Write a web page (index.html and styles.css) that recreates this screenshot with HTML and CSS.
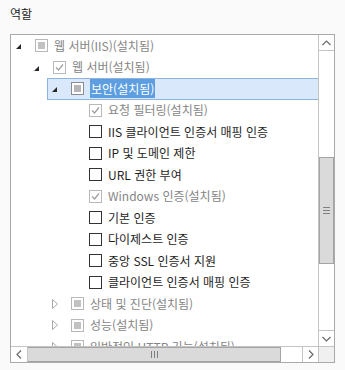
FILE: index.html
```html
<!DOCTYPE html>
<html lang="ko">

<head>
   <meta charset="UTF-8">
   <title>역할</title>
   <link rel="stylesheet" href="styles.css">
</head>

<body>
   <div class="title">역할</div>

   <div class="listbox">
       <div class="viewport">
           <div class="row lvl0"><span class="exp open"></span><span class="cb part"></span><span class="label dim">웹 서버(IIS)(설치됨)</span></div>
           <div class="row lvl1"><span class="exp open"></span><span class="cb done"><svg width="11" height="11" viewBox="0 0 11 11"><polyline points="2,5.5 4.5,8 9,2.5" /></svg></span><span class="label dim">웹 서버(설치됨)</span></div>
           <div class="row lvl2 selected"><span class="exp open"></span><span class="cb part dark"></span><span class="label"><span class="sel">보안(설치됨)</span></span></div>
           <div class="row lvl3"><span class="exp"></span><span class="cb done"><svg width="11" height="11" viewBox="0 0 11 11"><polyline points="2,5.5 4.5,8 9,2.5" /></svg></span><span class="label dim">요청 필터링(설치됨)</span></div>
           <div class="row lvl3"><span class="exp"></span><span class="cb"></span><span class="label">IIS 클라이언트 인증서 매핑 인증</span></div>
           <div class="row lvl3"><span class="exp"></span><span class="cb"></span><span class="label">IP 및 도메인 제한</span></div>
           <div class="row lvl3"><span class="exp"></span><span class="cb"></span><span class="label">URL 권한 부여</span></div>
           <div class="row lvl3"><span class="exp"></span><span class="cb done"><svg width="11" height="11" viewBox="0 0 11 11"><polyline points="2,5.5 4.5,8 9,2.5" /></svg></span><span class="label dim">Windows 인증(설치됨)</span></div>
           <div class="row lvl3"><span class="exp"></span><span class="cb"></span><span class="label">기본 인증</span></div>
           <div class="row lvl3"><span class="exp"></span><span class="cb"></span><span class="label">다이제스트 인증</span></div>
           <div class="row lvl3"><span class="exp"></span><span class="cb"></span><span class="label">중앙 SSL 인증서 지원</span></div>
           <div class="row lvl3"><span class="exp"></span><span class="cb"></span><span class="label">클라이언트 인증서 매핑 인증</span></div>
           <div class="row lvl2"><span class="exp closed"><svg width="6" height="10" viewBox="0 0 6 10"><polygon points="0.5,0.5 5.5,5 0.5,9.5" /></svg></span><span class="cb part"></span><span class="label dim">상태 및 진단(설치됨)</span></div>
           <div class="row lvl2"><span class="exp closed"><svg width="6" height="10" viewBox="0 0 6 10"><polygon points="0.5,0.5 5.5,5 0.5,9.5" /></svg></span><span class="cb part"></span><span class="label dim">성능(설치됨)</span></div>
           <div class="row lvl2"><span class="exp closed"><svg width="6" height="10" viewBox="0 0 6 10"><polygon points="0.5,0.5 5.5,5 0.5,9.5" /></svg></span><span class="cb part"></span><span class="label dim">일반적인 HTTP 기능(설치됨)</span></div>
       </div>

       <!-- vertical scrollbar -->
       <div class="vscroll">
           <div class="btn btn-up"><svg width="9" height="6" viewBox="0 0 9 6"><polyline points="0.5,5 4.5,1 8.5,5" /></svg></div>
           <div class="vtrack">
               <div class="vthumb"><span class="grip-v"></span></div>
           </div>
           <div class="btn btn-down"><svg width="9" height="6" viewBox="0 0 9 6"><polyline points="0.5,1 4.5,5 8.5,1" /></svg></div>
       </div>

       <!-- horizontal scrollbar -->
       <div class="hscroll">
           <div class="btn btn-left"><svg width="6" height="9" viewBox="0 0 6 9"><polyline points="5,0.5 1,4.5 5,8.5" /></svg></div>
           <div class="htrack">
               <div class="hthumb"><span class="grip-h"></span></div>
           </div>
           <div class="btn btn-right"><svg width="6" height="9" viewBox="0 0 6 9"><polyline points="1,0.5 5,4.5 1,8.5" /></svg></div>
       </div>

       <div class="corner"></div>
   </div>
</body>

</html>
```

FILE: styles.css
```css
body {
    margin: 0;
    padding: 6px 10px;
    background-color: #fafafa;
    font-family: "Noto Sans CJK KR", "Noto Sans", sans-serif;
    font-size: 12px;
    color: #1e1e1e;
}

.title {
    height: 16px;
    line-height: 16px;
    margin-bottom: 12px;
}

/* list box with scrollbars */
.listbox {
    width: 325px;
    height: 329px;
    box-sizing: border-box;
    border: 1px solid #a9a9a9;
    background-color: white;
    display: grid;
    grid-template-columns: 307px 16px;
    grid-template-rows: 311px 16px;
}

.viewport {
    overflow: hidden;
}

.row {
    height: 21.5px;
    display: flex;
    align-items: center;
    box-sizing: border-box;
    white-space: nowrap;
}

.lvl0 { margin-left: 0; }
.lvl1 { margin-left: 18px; }
.lvl2 { margin-left: 36px; }
.lvl3 { margin-left: 54px; }

.row.selected {
    background-color: #dae8fc;
    border: 1px solid #8eb3df;
    border-right: none;
}

.row.selected .exp {
    margin-left: -1px;
}

.exp {
    width: 24px;
    height: 10px;
    flex-shrink: 0;
    display: flex;
    align-items: center;
}

/* expanded: small filled triangle */
.exp.open::before {
    content: "";
    width: 0;
    height: 0;
    margin-left: 5px;
    margin-top: 2px;
    border-bottom: 5px solid #262626;
    border-left: 5px solid transparent;
}

.exp.closed svg {
    margin-left: 5px;
    fill: none;
    stroke: #a8a8a8;
    stroke-width: 1;
}

/* check boxes */
.cb {
    width: 13px;
    height: 13px;
    box-sizing: border-box;
    border: 1px solid #333;
    background-color: white;
    flex-shrink: 0;
    display: flex;
    align-items: center;
    justify-content: center;
}

.cb.part,
.cb.done {
    border-color: #b8b8b8;
}

.cb.part::after {
    content: "";
    width: 7px;
    height: 7px;
    background-color: #c2c2c2;
}

.cb.part.dark {
    border-color: #8c8c8c;
}

.cb.part.dark::after {
    background-color: #b5b5b5;
}

.cb svg {
    fill: none;
    stroke: #a0a0a0;
    stroke-width: 1.3;
}

.label {
    margin-left: 6px;
    line-height: 16px;
}

.dim {
    color: #858585;
}

.sel {
    background-color: #5c9ee0;
    color: white;
    padding: 1px 1px;
}

/* scrollbars */
.vscroll {
    border-left: 1px solid #c4c4c4;
    display: flex;
    flex-direction: column;
}

.btn {
    display: flex;
    align-items: center;
    justify-content: center;
    flex-shrink: 0;
}

.btn svg {
    fill: none;
    stroke: #6a6a6a;
    stroke-width: 1.2;
}

.btn-up {
    height: 15px;
    border-bottom: 1px solid #c4c4c4;
}

.btn-down {
    height: 15px;
    border-top: 1px solid #c4c4c4;
}

.vtrack {
    flex: 1;
}

.vthumb {
    margin-top: 106px;
    height: 107px;
    box-sizing: border-box;
    background-color: #dadada;
    border: 1px solid #a4a4a4;
    display: flex;
    align-items: center;
    justify-content: center;
}

.grip-v {
    width: 7px;
    height: 5px;
    border-top: 1px solid #808080;
    border-bottom: 1px solid #808080;
    position: relative;
}

.grip-v::after {
    content: "";
    position: absolute;
    left: 0;
    right: 0;
    top: 2px;
    border-top: 1px solid #808080;
}

.hscroll {
    border-top: 1px solid #c4c4c4;
    display: flex;
}

.btn-left {
    width: 16px;
    border-right: 1px solid #c4c4c4;
}

.btn-right {
    width: 15px;
    border-left: 1px solid #c4c4c4;
}

.htrack {
    flex: 1;
}

.hthumb {
    width: 253px;
    height: 100%;
    box-sizing: border-box;
    background-color: #dadada;
    border: 1px solid #a4a4a4;
    border-left: none;
    display: flex;
    align-items: center;
    justify-content: center;
}

.grip-h {
    width: 5px;
    height: 7px;
    border-left: 1px solid #808080;
    border-right: 1px solid #808080;
    position: relative;
}

.grip-h::after {
    content: "";
    position: absolute;
    top: 0;
    bottom: 0;
    left: 2px;
    border-left: 1px solid #808080;
}

.corner {
    background-color: #f0f0f0;
    border-top: 1px solid #c4c4c4;
    border-left: 1px solid #c4c4c4;
}
```
